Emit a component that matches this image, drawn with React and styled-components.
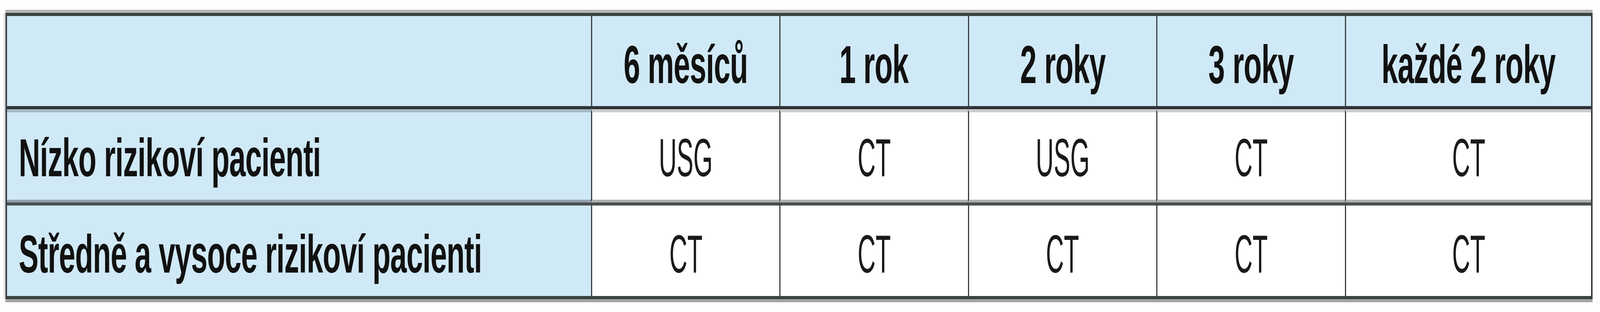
import { useEffect, useState } from "react";
import styled, { createGlobalStyle } from "styled-components";

// the table was laid out for a 7456px wide frame; k maps that width onto the real viewport
const FRAME_WIDTH = 7456;

const GlobalStyle = createGlobalStyle`
  html, body {
    margin: 0;
    padding: 0;
    background: #ffffff;
    overflow: hidden;
  }
  body {
    font-family: "Liberation Sans", Arial, sans-serif;
    color: #111111;
  }
`;

const Page = styled.div`
  padding-top: 33px;
  height: 767px;
`;

const Table = styled.div`
  display: grid;
  grid-template-columns: 2722fr 876fr 879fr 878fr 879fr 1147fr;
  grid-template-rows: 239px 239px 240px;
  box-sizing: border-box;
  margin-left: ${(p) => 25 * p.$k}px;
  width: ${(p) => 7397 * p.$k}px;
  border: 8px solid #3b4043;
  border-left-width: ${(p) => Math.max(3, 8 * p.$k)}px;
  border-right-width: ${(p) => Math.max(3, 8 * p.$k)}px;
  box-shadow: 0 -8px 0 #b4b4b4, 0 8px 0 #a3a3a3,
    ${(p) => -8 * p.$k}px 0 0 #dcdcdc;
`;

const Cell = styled.div`
  box-sizing: border-box;
  display: flex;
  align-items: center;
  justify-content: ${(p) => (p.$label ? "flex-start" : "center")};
  padding: ${(p) => p.$shift}px 0 0 ${(p) => (p.$label ? 56 * p.$k : 0)}px;
  background: ${(p) => (p.$tint ? "#d0e9f6" : "#ffffff")};
  border-left: ${(p) =>
    p.$first ? "none" : `${Math.max(2.5, 7 * p.$k)}px solid #393e41`};
  border-top: ${(p) => p.$top || "none"};
  border-bottom: ${(p) => p.$bottom || "none"};
  font-size: 138px;
  white-space: nowrap;
  min-width: 0;
`;

const Bold = styled.span`
  display: inline-block;
  font-family: "Liberation Sans", Arial, sans-serif;
  font-weight: 700;
  letter-spacing: -1.5px;
  transform-origin: ${(p) => (p.$label ? "left center" : "center center")};
  transform: scaleX(${(p) => p.$k});
`;

const Plain = styled.span`
  display: inline-block;
  font-family: "Liberation Sans", Arial, sans-serif;
  font-weight: 400;
  color: #1a1a1a;
  transform-origin: center center;
  transform: scaleX(${(p) => 0.84 * p.$k});
`;

const periods = ["6 měsíců", "1 rok", "2 roky", "3 roky", "každé 2 roky"];

const rows = [
  {
    label: "Nízko rizikoví pacienti",
    values: ["USG", "CT", "USG", "CT", "CT"],
    top: "8px solid rgba(0, 0, 0, 0.2)",
    bottom: "7px solid rgba(0, 0, 0, 0.3)",
    shift: 9,
  },
  {
    label: "Středně a vysoce rizikoví pacienti",
    values: ["CT", "CT", "CT", "CT", "CT"],
    top: "8px solid #4b5053",
    bottom: null,
    shift: 17,
  },
];

const headBorder = "8px solid #2f3436";

function useFrameScale() {
  const read = () => document.documentElement.clientWidth / FRAME_WIDTH;
  const [k, setK] = useState(read);
  useEffect(() => {
    const onResize = () => setK(read());
    window.addEventListener("resize", onResize);
    return () => window.removeEventListener("resize", onResize);
  }, []);
  return k;
}

export default function App() {
  const k = useFrameScale();

  return (
    <Page>
      <GlobalStyle />
      <Table $k={k}>
        <Cell $k={k} $first $tint $label $shift={18} $bottom={headBorder} />
        {periods.map((p) => (
          <Cell key={p} $k={k} $tint $shift={18} $bottom={headBorder}>
            <Bold $k={k}>{p}</Bold>
          </Cell>
        ))}
        {rows.map((row) => [
          <Cell
            key={row.label}
            $k={k}
            $first
            $tint
            $label
            $shift={row.shift}
            $top={row.top}
            $bottom={row.bottom}
          >
            <Bold $k={k} $label>
              {row.label}
            </Bold>
          </Cell>,
          ...row.values.map((v, i) => (
            <Cell
              key={row.label + i}
              $k={k}
              $shift={row.shift}
              $top={row.top}
              $bottom={row.bottom}
            >
              <Plain $k={k}>{v}</Plain>
            </Cell>
          )),
        ])}
      </Table>
    </Page>
  );
}
